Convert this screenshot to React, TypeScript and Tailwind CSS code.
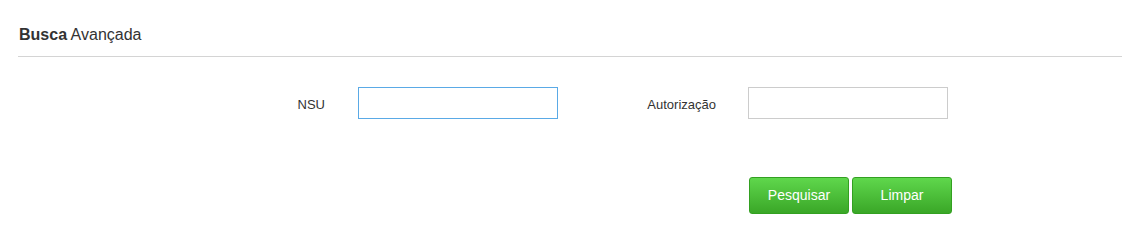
import React from "react";

export default function App() {
  return (
    <div className="w-[1140px] h-[251px] bg-white px-[18px] text-[#333]" style={{ fontFamily: '"Liberation Sans", Arial, sans-serif' }}>
      <div className="pt-[25px] pb-[11px] border-b border-[#d4d4d4] leading-[20px] text-[16px] pl-px">
        <span className="font-bold">Busca</span> Avançada
      </div>
      <div className="mt-[30px] flex items-center">
        <div className="w-[307px] text-right text-[13px] pt-[3px]">NSU</div>
        <input className="ml-[33px] w-[200px] h-[32px] border border-[#5aaae6] outline-none px-2 text-[13px]" />
        <div className="w-[158px] text-right text-[13px] pt-[3px]">Autorização</div>
        <input className="ml-[32px] w-[200px] h-[32px] border border-[#cccccc] outline-none px-2 text-[13px]" />
      </div>
      <div className="mt-[58px] flex gap-[3px] pl-[731px]">
        <button className="w-[100px] h-[37px] rounded-[3px] border border-[#33a021] bg-linear-to-b from-[#5fd74c] to-[#3aa727] text-white text-[14px]">
          Pesquisar
        </button>
        <button className="w-[100px] h-[37px] rounded-[3px] border border-[#33a021] bg-linear-to-b from-[#5fd74c] to-[#3aa727] text-white text-[14px]">
          Limpar
        </button>
      </div>
    </div>
  );
}
